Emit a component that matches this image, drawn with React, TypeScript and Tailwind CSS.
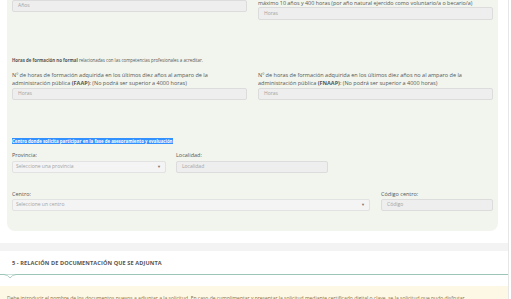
import React from "react";

const font = "font-['Open_Sans','Liberation_Sans',sans-serif]";

function Field({ placeholder, className = "" }: { placeholder: string; className?: string }) {
  return (
    <div
      className={`h-[12px] bg-[#eeeeee] border border-[#dcdcdc] rounded-[2px] flex items-center px-[5px] text-[5px] text-[#a3a3a3] ${className}`}
    >
      {placeholder}
    </div>
  );
}

function Select({ placeholder, className = "" }: { placeholder: string; className?: string }) {
  return (
    <div
      className={`h-[12px] bg-[#f4f4f4] border border-[#e2e2e2] rounded-[2px] flex items-center justify-between pl-[3px] pr-[4px] text-[5px] text-[#a3a3a3] ${className}`}
    >
      <span>{placeholder}</span>
      <span className="text-[4px] text-[#777]">▼</span>
    </div>
  );
}

export default function App() {
  return (
    <div className={`w-[511px] h-[299px] overflow-hidden bg-white ${font}`}>
      <div className="w-[509px] h-full border-r border-[#e6e6e6]">
        {/* Green form panel */}
        <div className="ml-[7px] w-[491px] bg-[#f1f5ee] rounded-b-[8px] px-[5px] pb-[20px] text-[#555]">
          {/* row 1 */}
          <div className="grid grid-cols-2 gap-x-[11px]">
            <div>
              <Field placeholder="Años" className="h-[12px]" />
            </div>
            <div>
              <div className="text-[5.4px] leading-[7px] -mt-[0px]">
                máximo 10 años y 400 horas (por año natural ejercido como voluntario/a o becario/a)
              </div>
              <Field placeholder="Horas" className="h-[13px]" />
            </div>
          </div>

          <div className="mt-[37px] text-[4.4px] leading-[6px]">
            <span className="font-bold">Horas de formación no formal</span> relacionadas con las competencias
            profesionales a acreditar.
          </div>

          <div className="grid grid-cols-2 gap-x-[11px] mt-[8px]">
            <div>
              <div className="text-[5.5px] leading-[8px]">
                Nº de horas de formación adquirida en los últimos diez años al amparo de la administración pública{" "}
                <span className="font-bold">(FAAP)</span>: (No podrá ser superior a 4000 horas)
              </div>
              <Field placeholder="Horas" className="mt-[1px]" />
            </div>
            <div>
              <div className="text-[5.5px] leading-[8px]">
                Nº de horas de formación adquirida en los últimos diez años no al amparo de la administración pública{" "}
                <span className="font-bold">(FNAAP)</span>: (No podrá ser superior a 4000 horas)
              </div>
              <Field placeholder="Horas" className="mt-[1px]" />
            </div>
          </div>

          <div className="mt-[38px] text-[4.4px] leading-[6px]">
            <span className="font-bold bg-[#3390ff] text-white">
              Centro donde solicita participar en la fase de asesoramiento y evaluación
            </span>
          </div>

          <div className="flex gap-x-[10px] mt-[8px]">
            <div className="w-[154px]">
              <div className="text-[5.5px] leading-[7px]">Provincia:</div>
              <Select placeholder="Seleccione una provincia" className="mt-[2px]" />
            </div>
            <div className="w-[152px]">
              <div className="text-[5.5px] leading-[7px]">Localidad:</div>
              <Field placeholder="Localidad" className="mt-[2px]" />
            </div>
          </div>

          <div className="flex gap-x-[11px] mt-[18px]">
            <div className="w-[358px]">
              <div className="text-[5.5px] leading-[7px]">Centro:</div>
              <Select placeholder="Seleccione un centro" className="mt-[1px]" />
            </div>
            <div className="w-[112px]">
              <div className="text-[5.5px] leading-[7px]">Código centro:</div>
              <Field placeholder="Código" className="mt-[1px]" />
            </div>
          </div>
        </div>

        {/* separator strip */}
        <div className="mt-[12px] h-[8px] bg-[#f3f3f3]" />

        {/* Section 5 heading */}
        <div className="relative h-[24px] border-b border-[#9cc4b8] flex items-center pl-[12px] pt-[1px]">
          <span className="text-[5.6px] font-bold text-[#555] tracking-[0.1px]">
            5 - RELACIÓN DE DOCUMENTACIÓN QUE SE ADJUNTA
          </span>
          <svg className="absolute left-[4px] top-[23px]" width="12" height="5" viewBox="0 0 12 5">
            <path d="M0 0.5 Q4 1 6 4 Q8 1 12 0.5" fill="white" stroke="#9cc4b8" strokeWidth="0.8" />
          </svg>
        </div>

        {/* warning box */}
        <div className="mt-[11px] bg-[#fcf8e5] h-[30px] pt-[9px] pl-[7px] whitespace-nowrap overflow-hidden text-[5px] text-[#8a6d3b]">
          Debe introducir el nombre de los documentos nuevos a adjuntar a la solicitud. En caso de cumplimentar y
          presentar la solicitud mediante certificado digital o clave, se la solicitud que pudo disfrutar
        </div>
      </div>
    </div>
  );
}
